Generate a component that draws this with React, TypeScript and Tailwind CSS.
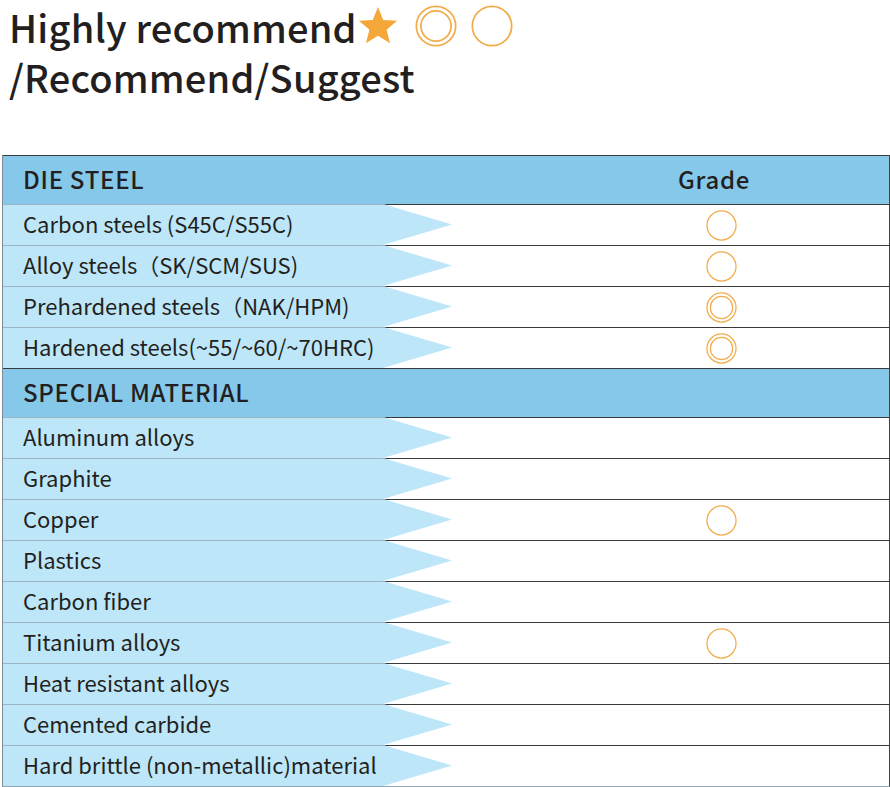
import React from 'react';

type Mark = 'none' | 'single' | 'double';

interface Row {
  label: string;
  mark: Mark;
}

const DIE_STEEL: Row[] = [
  { label: 'Carbon steels (S45C/S55C)', mark: 'single' },
  { label: 'Alloy steels（SK/SCM/SUS)', mark: 'single' },
  { label: 'Prehardened steels（NAK/HPM)', mark: 'double' },
  { label: 'Hardened steels(~55/~60/~70HRC)', mark: 'double' },
];

const SPECIAL: Row[] = [
  { label: 'Aluminum alloys', mark: 'none' },
  { label: 'Graphite', mark: 'none' },
  { label: 'Copper', mark: 'single' },
  { label: 'Plastics', mark: 'none' },
  { label: 'Carbon fiber', mark: 'none' },
  { label: 'Titanium alloys', mark: 'single' },
  { label: 'Heat resistant alloys', mark: 'none' },
  { label: 'Cemented carbide', mark: 'none' },
  { label: 'Hard brittle (non-metallic)material', mark: 'none' },
];

const Circle = ({ double = false, size = 31 }: { double?: boolean; size?: number }) => (
  <svg width={size} height={size} viewBox="0 0 32 32" className="block">
    <circle cx="16" cy="16" r="15" fill="none" stroke="#f2ac4a" strokeWidth="1.3" />
    {double && <circle cx="16" cy="16" r="11.5" fill="none" stroke="#f2ac4a" strokeWidth="1.3" />}
  </svg>
);

const Star = () => (
  <svg width="42" height="42" viewBox="0 0 24 24" className="block">
    <path
      d="M12 1.2l3 7.3 7.9.5-6 5.1 2 7.8L12 17.6l-6.9 4.3 2-7.8-6-5.1 7.9-.5z"
      fill="#f5a83a"
    />
  </svg>
);

// pentagon label cell: blue band with an arrow tip pointing at the grade column
const DataRow = ({ row }: { row: Row }) => (
  <div className="flex h-[41px] border-t border-[#3a3a3a] bg-white">
    <div className="w-[449px] shrink-0">
      <div className="-mt-px flex h-[41px] items-center border-t border-[#9bb4c2] bg-[#bde6f8] pb-[3px] pl-[20px] text-[22px] text-[#231f20] [clip-path:polygon(0_0,380px_0,449px_50%,380px_100%,0_100%)]">
        {row.label}
      </div>
    </div>
    <div className="flex flex-1 items-center pl-[254px]">
      {row.mark !== 'none' && <Circle double={row.mark === 'double'} />}
    </div>
  </div>
);

export default function App() {
  return (
    <div className="h-[787px] w-[890px] overflow-hidden bg-white font-['Noto_Sans_CJK_SC','Noto_Sans',sans-serif] text-[#231f20]">
      <div className="pl-[9px] pt-[2px] text-[38px] font-medium leading-[50px] tracking-[0.005em]">
        <div className="flex items-center">
          <span>Highly recommend</span>
          <span className="-mt-[2px]"><Star /></span>
          <span className="ml-[16px] -mt-[2px]"><Circle double size={42} /></span>
          <span className="ml-[14px] -mt-[2px]"><Circle size={42} /></span>
        </div>
        <div>/Recommend/Suggest</div>
      </div>

      <div className="ml-[2px] mt-[53px] w-[888px] border-b border-l border-r border-b-[#8fa6b4] border-l-[#7d8b94] border-r-[#444]">
        <div className="flex h-[49px] items-center border-t border-[#3a3a3a] bg-[#85c8ea] pb-[2px] text-[24px] font-medium tracking-[0.03em]">
          <div className="w-[452px] shrink-0 pl-[20px]">DIE STEEL</div>
          <div className="pl-[223px]">Grade</div>
        </div>
        {DIE_STEEL.map((r) => (
          <DataRow key={r.label} row={r} />
        ))}
        <div className="flex h-[49px] items-center border-t border-[#3a3a3a] bg-[#85c8ea] pb-[2px] pl-[20px] text-[24px] font-medium tracking-[0.03em]">
          SPECIAL MATERIAL
        </div>
        {SPECIAL.map((r) => (
          <DataRow key={r.label} row={r} />
        ))}
      </div>
    </div>
  );
}
